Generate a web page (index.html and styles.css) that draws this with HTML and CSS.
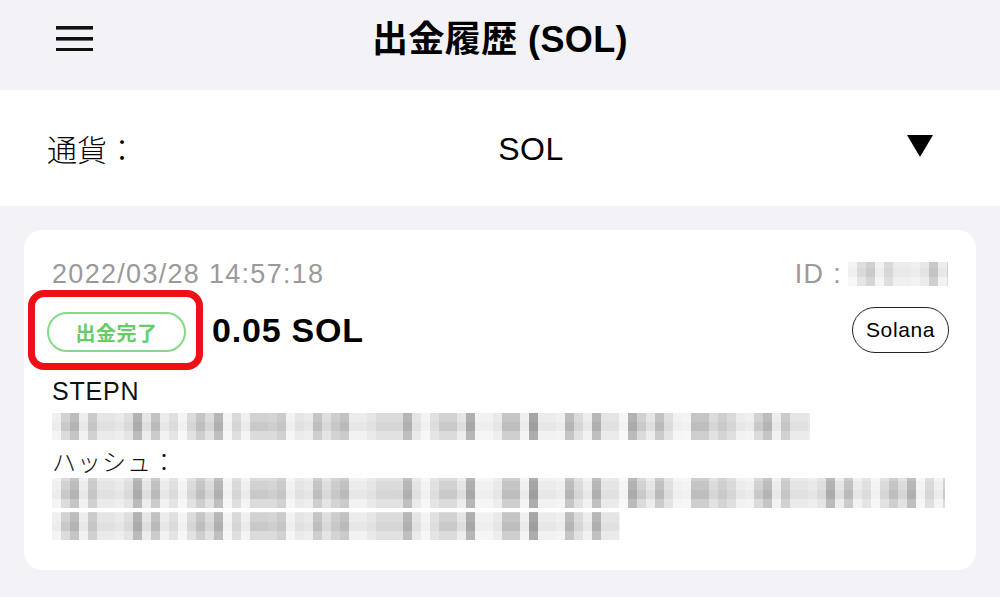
FILE: index.html
```html
<!DOCTYPE html>
<html lang="ja">
<head>
<meta charset="utf-8">
<title>出金履歴 (SOL)</title>
<link rel="stylesheet" href="styles.css">
</head>
<body>
<div class="app">
  <header class="topbar">
    <div class="menu">
      <svg width="37" height="25" viewBox="0 0 37 25" aria-hidden="true">
        <rect x="0" y="0" width="37" height="3.6" fill="#111"/>
        <rect x="0" y="11" width="37" height="3.6" fill="#111"/>
        <rect x="0" y="22" width="37" height="3.6" fill="#111"/>
      </svg>
    </div>
    <h1 class="title">出金履歴 (SOL)</h1>
    <div></div>
  </header>

  <section class="currency">
    <span class="currency-label">通貨：</span>
    <span class="currency-value">SOL</span>
    <svg class="caret" width="26" height="22" viewBox="0 0 26 22" aria-hidden="true">
      <polygon points="0,0 26,0 13,22" fill="#000"/>
    </svg>
  </section>

  <main class="list">
    <article class="card">
      <div class="row-meta">
        <span class="date">2022/03/28 14:57:18</span>
        <span class="id">ID : <span class="mosaic mosaic-id"></span></span>
      </div>
      <div class="row-main">
        <div class="highlight">
          <span class="badge">出金完了</span>
        </div>
        <span class="amount">0.05 SOL</span>
        <span class="network">Solana</span>
      </div>
      <div class="label">STEPN</div>
      <div class="mosaic mosaic-line1"></div>
      <div class="label label-hash">ハッシュ：</div>
      <div class="mosaic mosaic-line2"></div>
      <div class="mosaic mosaic-line3"></div>
    </article>
  </main>
</div>
</body>
</html>
```

FILE: styles.css
```css
* { box-sizing: border-box; }
html, body {
  margin: 0;
  padding: 0;
  background: #f2f2f7;
}
body {
  font-family: "Liberation Sans", "Noto Sans CJK JP", sans-serif;
  color: #000;
  width: 1000px;
  height: 597px;
  overflow: hidden;
}
.topbar {
  height: 90px;
  display: grid;
  grid-template-columns: 1fr auto 1fr;
  align-items: start;
  background: #f2f2f7;
}
.menu {
  padding-left: 56px;
  padding-top: 26px;
  line-height: 0;
}
.title {
  margin: 0;
  padding-top: 18px;
  font-size: 36px;
  line-height: 43px;
  font-weight: bold;
  letter-spacing: 0.4px;
}
.currency {
  height: 116px;
  background: #fff;
  display: flex;
  align-items: center;
  padding: 0 67px 0 47px;
}
.currency-label {
  font-size: 30px;
  line-height: 40px;
  width: 108px;
  white-space: nowrap;
  font-weight: 300;
  font-family: "Noto Sans CJK JP", sans-serif;
  padding-top: 0;
}
.currency-value {
  flex: 1;
  text-align: center;
  font-size: 32px;
  line-height: 40px;
  padding-top: 2px;
  letter-spacing: 0.5px;
}
.caret {
  display: block;
  margin-top: -4px;
}
.list {
  padding: 24px 24px 0;
}
.card {
  background: #fff;
  border-radius: 18px;
  padding: 29px 28px 30px 28px;
}
.row-meta {
  display: flex;
  justify-content: space-between;
  align-items: center;
  height: 30px;
  color: #9a9a9a;
  font-size: 27px;
  line-height: 30px;
  letter-spacing: 1.3px;
}
.id {
  display: flex;
  align-items: center;
  gap: 6px;
}
.row-main {
  display: flex;
  align-items: center;
  margin-top: 1px;
  height: 80px;
}
.highlight {
  margin-left: -24px;
  border: 7px solid #ef0f16;
  border-radius: 16px;
  padding: 8px 10px 4px 12px;
  height: 80px;
  display: flex;
  align-items: center;
}
.badge {
  display: flex;
  align-items: center;
  justify-content: center;
  width: 139px;
  height: 40px;
  border: 2px solid #86da86;
  border-radius: 20px;
  color: #67cc67;
  font-size: 20px;
  font-weight: bold;
  letter-spacing: 0.5px;
  font-family: "Noto Sans CJK JP", sans-serif;
}
.amount {
  margin-left: 9px;
  font-size: 34px;
  font-weight: bold;
  line-height: 40px;
  letter-spacing: 0.8px;
  flex: 1;
}
.network {
  display: flex;
  align-items: center;
  justify-content: center;
  width: 97px;
  height: 46px;
  border: 1.5px solid #222;
  border-radius: 23px;
  font-size: 21px;
  letter-spacing: 0.6px;
  margin-right: -1px;
  margin-top: 0;
}
.label {
  font-size: 25px;
  line-height: 30px;
  margin-top: 6px;
  color: #111;
  letter-spacing: 0.8px;
}
.label-hash {
  font-family: "Noto Sans CJK JP", sans-serif;
  font-size: 24px;
  font-weight: 300;
  letter-spacing: 1px;
  margin-top: 6px;
}
.mosaic {
  display: block;
  background-color: #d4d4d4;
  background-image:
    repeating-linear-gradient(90deg,
      rgba(255,255,255,0.55) 0 9px, rgba(0,0,0,0.05) 9px 27px,
      rgba(255,255,255,0.25) 27px 36px, rgba(0,0,0,0.12) 36px 45px,
      rgba(255,255,255,0.45) 45px 63px),
    repeating-linear-gradient(90deg,
      rgba(0,0,0,0) 0 18px, rgba(0,0,0,0.1) 18px 27px,
      rgba(255,255,255,0.3) 27px 45px, rgba(0,0,0,0.06) 45px 72px,
      rgba(255,255,255,0.4) 72px 81px, rgba(0,0,0,0.15) 81px 90px,
      rgba(0,0,0,0) 90px 99px),
    repeating-linear-gradient(0deg,
      rgba(255,255,255,0.45) 0 9px, rgba(255,255,255,0) 9px 18px,
      rgba(255,255,255,0.2) 18px 27px);
  filter: blur(0.5px);
}
.mosaic-id {
  width: 100px;
  height: 24px;
  opacity: 0.7;
}
.mosaic-line1 {
  width: 758px;
  height: 27px;
  margin-top: 7px;
}
.mosaic-line2 {
  width: 893px;
  height: 30px;
  margin-top: 2px;
}
.mosaic-line3 {
  width: 568px;
  height: 28px;
  margin-top: 4px;
}
```
